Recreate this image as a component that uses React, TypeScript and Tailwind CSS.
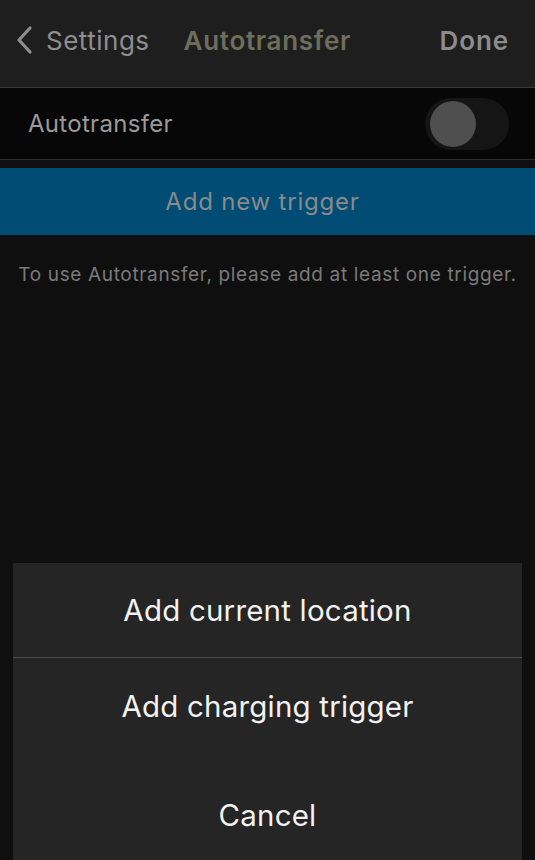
import React from "react";

const font = { fontFamily: 'Inter, "Open Sans", "Liberation Sans", sans-serif' };

const App: React.FC = () => {
  return (
    <div className="w-[535px] h-[860px] bg-[#0f0f0f] flex flex-col overflow-hidden" style={font}>
      {/* Nav bar */}
      <div className="h-[88px] bg-[#1e1e1e] border-b border-[#3a3a3a] flex items-center px-[14px] pb-[7px]">
        <svg width="20" height="32" viewBox="0 0 20 32" className="mr-[12px]">
          <path d="M16 4 L5 16 L16 28" stroke="#8e8e8e" strokeWidth="3.2" fill="none" strokeLinecap="round" strokeLinejoin="round" />
        </svg>
        <span className="text-[26px] text-[#8e8e8e] tracking-[0.5px]">Settings</span>
        <span className="ml-[34px] text-[26px] font-semibold text-[#6e6e5c] tracking-[0.7px]">Autotransfer</span>
        <span className="ml-auto mr-[12px] text-[26px] font-semibold text-[#8c8c8c] tracking-[0.9px]">Done</span>
      </div>

      {/* Toggle row */}
      <div className="h-[72px] bg-[#070707] border-b border-[#2a2a2a] flex items-center pl-[28px] pr-[26px]">
        <span className="text-[24px] text-[#9a9a9a] tracking-[0.3px]">Autotransfer</span>
        <div className="ml-auto w-[84px] h-[52px] rounded-full bg-[#151515] flex items-center pl-[5px]">
          <div className="w-[46px] h-[46px] rounded-full bg-[#4f4f4f]" />
        </div>
      </div>

      <div className="h-[8px]" />

      {/* Add new trigger */}
      <div className="h-[67px] bg-[#004c75] flex items-center justify-center pr-[10px]">
        <span className="text-[24px] text-[#8a8a8a] tracking-[0.8px]">Add new trigger</span>
      </div>

      <p className="mt-[26px] text-center text-[19px] text-[#7a7a7a] tracking-[0.65px]">
        To use Autotransfer, please add at least one trigger.
      </p>

      <div className="flex-1" />

      {/* Action sheet */}
      <div className="mx-[13px] h-[297px] bg-[#252525] flex flex-col">
        <div className="h-[95px] border-b border-[#4a4a4a] flex items-center justify-center">
          <span className="text-[29.5px] text-[#f2f2f2] tracking-[0.2px]">Add current location</span>
        </div>
        <div className="h-[96px] flex items-center justify-center">
          <span className="text-[29.5px] text-[#f2f2f2] tracking-[0.2px]">Add charging trigger</span>
        </div>
        <div className="flex-1 flex items-center justify-center pt-[16px]">
          <span className="text-[29.5px] text-[#f2f2f2] tracking-[0.2px]">Cancel</span>
        </div>
      </div>
    </div>
  );
};

export default App;
